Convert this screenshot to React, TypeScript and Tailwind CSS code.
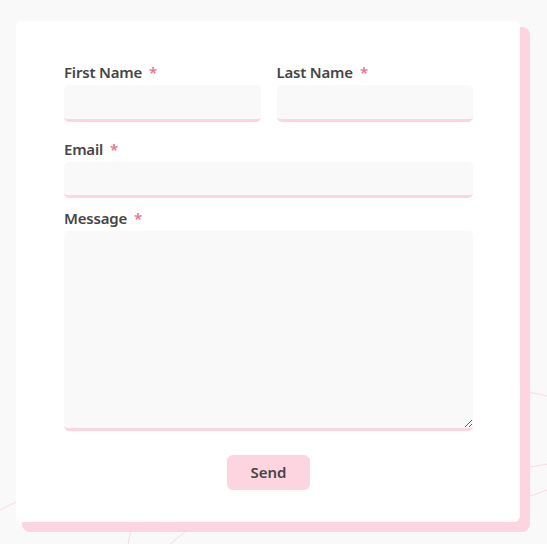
export default function App() {
  const font = { fontFamily: '"Noto Sans", "Open Sans", sans-serif' }

  const label = 'mb-[3px] flex items-center text-[15px] font-semibold leading-[19px] tracking-[-0.2px] text-[#464646]'
  const star = <span className="ml-[7px] text-[#ef6f8f]">*</span>
  const field =
    'block w-full rounded-[5px] border-0 border-b-[3px] border-[#fdd5e0] bg-[#f9f9f9] outline-none'

  return (
    <div className="relative min-h-screen w-full overflow-hidden bg-[#f9f9f9]" style={font}>
      <svg className="pointer-events-none absolute inset-0" width="547" height="544">
        <g stroke="#f8dbe3" strokeWidth="1" fill="none">
          <path d="M0 510 L20 500" />
          <path d="M128 544 L132 525" />
          <path d="M170 544 L190 528" />
          <path d="M525 392 Q536 393 547 396" />
          <path d="M525 468 L547 464" />
          <path d="M525 498 L547 490" />
        </g>
      </svg>

      <div className="relative pl-[16px] pt-[21px]">
        <div className="h-[501px] w-[504px] rounded-[6px] bg-white pl-[48px] pr-[47px] pt-[42px] shadow-[8px_8px_0_2px_#fdd5e0]">
          <div className="flex gap-[16px]">
            <div className="flex-1">
              <label className={label}>First Name {star}</label>
              <input className={field + ' h-[37px]'} />
            </div>
            <div className="flex-1">
              <label className={label}>Last Name {star}</label>
              <input className={field + ' h-[37px]'} />
            </div>
          </div>

          <div className="mt-[18px]">
            <label className={label}>Email {star}</label>
            <input className={field + ' h-[36px]'} />
          </div>

          <div className="mt-[11px]">
            <label className={label}>Message {star}</label>
            <textarea className={field + ' h-[200px] resize-y'} />
          </div>

          <div className="mt-[24px] flex justify-center">
            <button className="h-[35px] w-[83px] rounded-[6px] bg-[#fdd5e0] text-[15px] font-semibold text-[#464646]">
              Send
            </button>
          </div>
        </div>
      </div>
    </div>
  )
}
